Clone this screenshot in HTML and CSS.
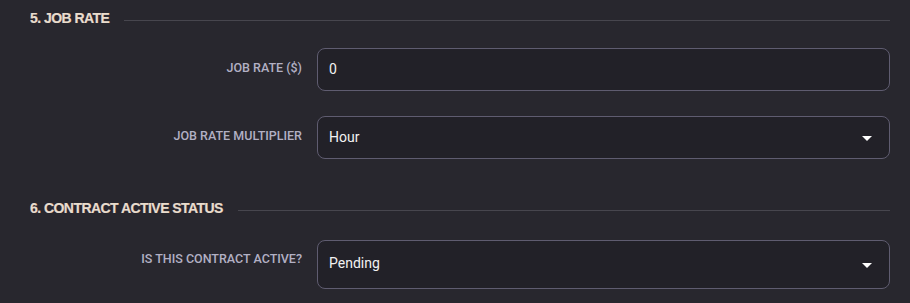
FILE: index.html
```html
<!DOCTYPE html>
<html>
<head>
<meta charset="utf-8">
<link rel="stylesheet" href="styles.css">
</head>
<body>
<div class="form">
  <div class="section-head">
    <h2 class="section-title">5. JOB RATE</h2>
    <div class="section-line"></div>
  </div>
  <div class="field first">
    <label class="field-label">JOB RATE ($)</label>
    <div class="control"><span class="value">0</span></div>
  </div>
  <div class="field second">
    <label class="field-label">JOB RATE MULTIPLIER</label>
    <div class="control select"><span class="value">Hour</span><span class="caret"></span></div>
  </div>
  <div class="section-head second-head">
    <h2 class="section-title">6. CONTRACT ACTIVE STATUS</h2>
    <div class="section-line"></div>
  </div>
  <div class="field third">
    <label class="field-label">IS THIS CONTRACT ACTIVE?</label>
    <div class="control select tall"><span class="value">Pending</span><span class="caret"></span></div>
  </div>
</div>
</body>
</html>
```
FILE: styles.css
```css
html, body {
  margin: 0;
  padding: 0;
  background: #28272e;
}
body {
  width: 910px;
  height: 303px;
  overflow: hidden;
  font-family: Roboto, "Liberation Sans", sans-serif;
}
.form {
  padding: 8px 20px 0 30px;
}
.section-head {
  display: flex;
  align-items: center;
  gap: 15px;
  height: 20px;
}
.section-title {
  margin: 0;
  font-family: "Liberation Sans", Arial, sans-serif;
  font-weight: 700;
  font-size: 14px;
  line-height: 20px;
  letter-spacing: -0.55px;
  color: #e9dccd;
  white-space: nowrap;
  -webkit-text-stroke: 0.2px #e9dccd;
}
.section-line {
  flex: 1;
  height: 1px;
  margin-top: 4px;
  background: #47464e;
}
.second-head {
  margin-top: 39px;
}
.field {
  display: grid;
  grid-template-columns: 272px 1fr;
  gap: 15px;
  align-items: start;
}
.field.first { margin-top: 20px; }
.field.second { margin-top: 25px; }
.field.third { margin-top: 22px; }
.field-label {
  text-align: right;
  font-family: Roboto, "Liberation Sans", sans-serif;
  font-weight: 500;
  font-size: 12.5px;
  line-height: 16px;
  color: #b2b0c4;
  padding-top: 12px;
}
.field.third .field-label { padding-top: 11px; }
.control {
  position: relative;
  box-sizing: border-box;
  height: 43px;
  border: 1px solid #5f5c70;
  border-radius: 8px;
  background: #222128;
  padding: 12px 11px;
  display: flex;
  align-items: flex-start;
}
.control.tall {
  height: 49px;
  padding-top: 14px;
}
.value {
  font-family: Roboto, "Liberation Sans", sans-serif;
  font-size: 14px;
  line-height: 17px;
  color: #f2f2f2;
}
.caret {
  position: absolute;
  right: 17px;
  top: 50%;
  margin-top: -2px;
  width: 0;
  height: 0;
  border-left: 5px solid transparent;
  border-right: 5px solid transparent;
  border-top: 5px solid #ffffff;
}
```
